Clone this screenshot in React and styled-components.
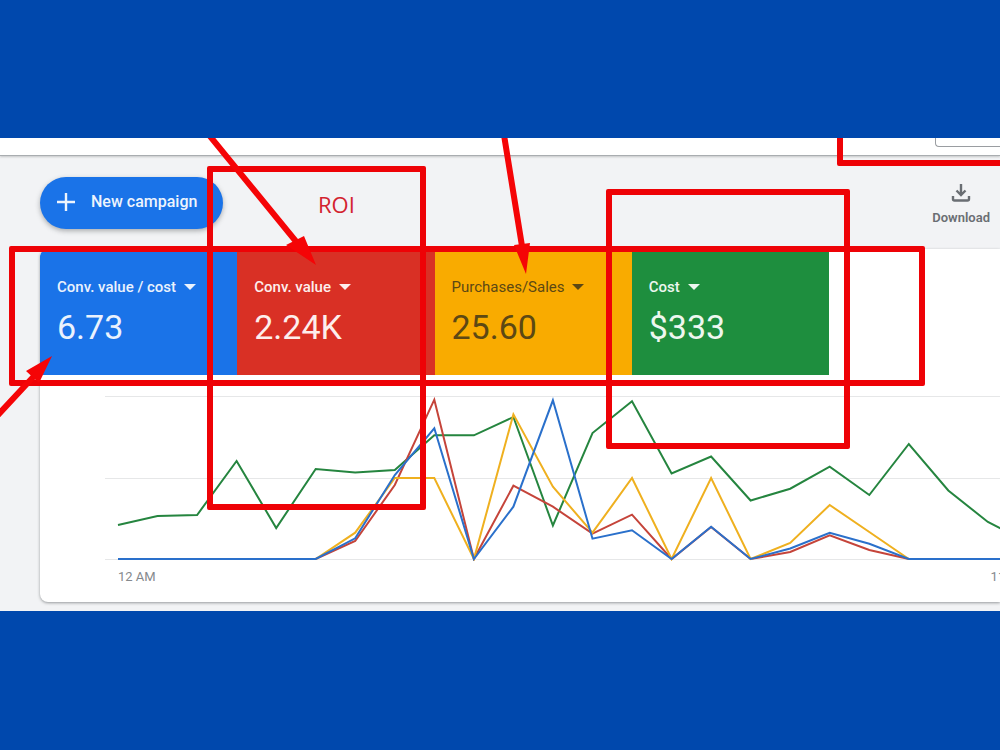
import React from "react";
import styled, { createGlobalStyle } from "styled-components";

const GlobalStyle = createGlobalStyle`
  * { box-sizing: border-box; }
  body { margin: 0; background: #0048ad; font-family: Roboto, "Liberation Sans", sans-serif; }
`;

const Page = styled.main`
  display: flex;
  flex-direction: column;
  justify-content: center;
  min-height: 100vh;
  padding-bottom: 1px;
  background: #0048ad;
`;

const Panel = styled.section`
  position: relative;
  overflow: hidden;
  background: #f2f3f5;
  padding-bottom: 9px;
`;

const TopStrip = styled.div`
  display: flex;
  justify-content: flex-end;
  align-items: flex-start;
  height: 18px;
  background: #fff;
  border-bottom: 1px solid #a9adb0;
  box-shadow: 0 1px 2px rgba(60, 64, 67, 0.25);
`;

const StripField = styled.div`
  width: 65px;
  height: 9px;
  border: 1px solid #9a9da1;
  border-width: 0 0 1px 1px;
  border-bottom-left-radius: 4px;
`;

const Toolbar = styled.header`
  display: flex;
  justify-content: space-between;
  align-items: center;
  padding: 21px 10px 20px 40px;
`;

const CampaignButton = styled.button`
  display: flex;
  align-items: center;
  gap: 13px;
  height: 52px;
  width: 183px;
  padding: 0 0 2px 14px;
  border: 0;
  border-radius: 26px;
  background: #1a73e8;
  color: #edf4fd;
  font: 500 16px/24px Roboto, sans-serif;
  white-space: nowrap;
  box-shadow: 0 2px 5px rgba(60, 64, 67, 0.4);
`;

const DownloadButton = styled.button`
  display: flex;
  flex-direction: column;
  align-items: center;
  gap: 5px;
  padding: 0;
  border: 0;
  background: none;
  color: #6a6e73;
  font: 600 13px/16px Roboto, sans-serif;
`;

const Card = styled.section`
  margin-left: 40px;
  background: #fff;
  border-radius: 8px 0 0 8px;
  box-shadow: 0 1px 3px rgba(60, 64, 67, 0.5);
`;

const Tiles = styled.div`
  display: grid;
  grid-template-columns: repeat(4, 1fr);
  max-width: 789px;
  overflow: hidden;
  border-top-left-radius: 8px;
`;

const Tile = styled.article`
  display: flex;
  flex-direction: column;
  align-items: flex-start;
  gap: 10px;
  height: 126px;
  padding: 28px 0 0 17px;
  background: ${(p) => p.$bg};
  color: ${(p) => p.$fg};
`;

const MetricButton = styled.button`
  display: flex;
  align-items: center;
  gap: 8px;
  padding: 0;
  border: 0;
  background: none;
  color: inherit;
  font: ${(p) => p.$weight} 15px/20px Roboto, sans-serif;
  white-space: nowrap;
`;

const Caret = styled.span`
  border: 6px solid transparent;
  border-top-color: currentColor;
  border-bottom-width: 0;
`;

const Value = styled.strong`
  font: 400 34px/40px Roboto, sans-serif;
`;

const ChartArea = styled.div`
  padding: 20px 0 17px 65px;
`;

const ChartSvg = styled.svg`
  display: block;
  width: 100%;
  height: 166px;
`;

const Axis = styled.div`
  display: flex;
  justify-content: space-between;
  margin: 8px -28px 0 13px;
  color: #85898d;
  font: 400 13px/16px Roboto, sans-serif;
`;

const Outline = styled.div`
  position: absolute;
  left: ${(p) => p.$x}px;
  top: ${(p) => p.$y}px;
  width: ${(p) => p.$w}px;
  height: ${(p) => p.$h}px;
  border: 6px solid #ee0206;
  border-radius: 2px;
  pointer-events: none;
`;

const Note = styled.span`
  position: absolute;
  left: 318px;
  top: 52px;
  color: #d3222f;
  font: 400 22px/28px "Open Sans", sans-serif;
`;

const Arrows = styled.svg`
  position: absolute;
  left: 0;
  top: 0;
  pointer-events: none;
`;

const metrics = [
  { label: "Conv. value / cost", value: "6.73", bg: "#1a73e8", fg: "#eaf2fd", weight: 500 },
  { label: "Conv. value", value: "2.24K", bg: "#d93025", fg: "#fdeeed", weight: 500 },
  { label: "Purchases/Sales", value: "25.60", bg: "#f9ab00", fg: "#5c4814", weight: 400 },
  { label: "Cost", value: "$333", bg: "#1e8e3e", fg: "#edf7ef", weight: 500 },
];

const BASE = 164;
const flat = (n) => Array(n).fill(BASE);
const series = [
  { color: "#25853f", points: [130, 121, 120, 66, 133, 74, 77.5, 75, 40.3, 40.3, 22, 130.5, 38, 6.3, 78.5, 61.5, 105.5, 93.7, 71.7, 100, 49, 95.5, 127, 147] },
  { color: "#c5443a", points: [...flat(6), 146, 90, 4.7, BASE, 90.7, 111.7, 138.7, 119.7, BASE, 132, BASE, 157, 140.3, 155, ...flat(4)] },
  { color: "#efb01f", points: [...flat(6), 137.7, 83, 83, BASE, 19.3, 91.7, 137.7, 83, BASE, 83, BASE, 148, 110, 137, ...flat(4)] },
  { color: "#2a70cb", points: [...flat(6), 143.3, 80, 33.3, BASE, 111.7, 5.3, 143.7, 135.3, BASE, 131.7, BASE, 153.5, 137.7, 148.7, ...flat(4)] },
];

const toPoints = (ys) => ys.map((y, i) => `${(13 + i * 39.54).toFixed(1)},${y}`).join(" ");

function Chart() {
  return (
    <ChartSvg viewBox="0 0 895 166" preserveAspectRatio="none" role="img" aria-label="Metrics by hour">
      {[1.5, 83.5, 164.5].map((y) => (
        <path key={y} d={`M0 ${y}H895`} stroke="#e6e7e8" />
      ))}
      {series.map((s) => (
        <polyline key={s.color} points={toPoints(s.points)} fill="none" stroke={s.color} strokeWidth="2" vectorEffect="non-scaling-stroke" />
      ))}
    </ChartSvg>
  );
}

export default function App() {
  return (
    <>
      <GlobalStyle />
      <Page>
        <Panel>
          <TopStrip>
            <StripField />
          </TopStrip>
          <Toolbar>
            <CampaignButton type="button">
              <svg width="24" height="24" viewBox="0 0 24 24" fill="none" stroke="currentColor" strokeWidth="2.4">
                <path d="M12 3v18M3 12h18" />
              </svg>
              New campaign
            </CampaignButton>
            <DownloadButton type="button">
              <svg width="24" height="24" viewBox="0 0 24 24" fill="none" stroke="currentColor" strokeWidth="2.4">
                <path d="M12 3v11M7.500 9.500l4.500 4.500 4.500-4.500M4 15v3q0 1.500 1.500 1.500h13q1.500 0 1.500-1.500V15" />
              </svg>
              Download
            </DownloadButton>
          </Toolbar>
          <Card>
            <Tiles>
              {metrics.map((m) => (
                <Tile key={m.label} $bg={m.bg} $fg={m.fg}>
                  <MetricButton type="button" $weight={m.weight}>
                    {m.label}
                    <Caret />
                  </MetricButton>
                  <Value>{m.value}</Value>
                </Tile>
              ))}
            </Tiles>
            <ChartArea>
              <Chart />
              <Axis>
                <span>12 AM</span>
                <span>11 PM</span>
              </Axis>
            </ChartArea>
          </Card>
          <Outline $x={9} $y={108} $w={916} $h={140} />
          <Outline $x={207} $y={28} $w={219} $h={344} />
          <Outline $x={606} $y={51} $w={244} $h={260} />
          <Outline $x={837} $y={-40} $w={300} $h={68} />
          <Note>ROI</Note>
          <Arrows width="600" height="300" viewBox="0 0 600 300" stroke="#f50406" strokeWidth="6" fill="none">
            <path d="M209 -3L303 112M504 -3L522 108M-3 278L36 236" />
            <path d="M316 127L286 107L304 98ZM526 136L514 107L530 105ZM52 218L26 233L39 245Z" fill="#f50406" stroke="none" />
          </Arrows>
        </Panel>
      </Page>
    </>
  );
}
